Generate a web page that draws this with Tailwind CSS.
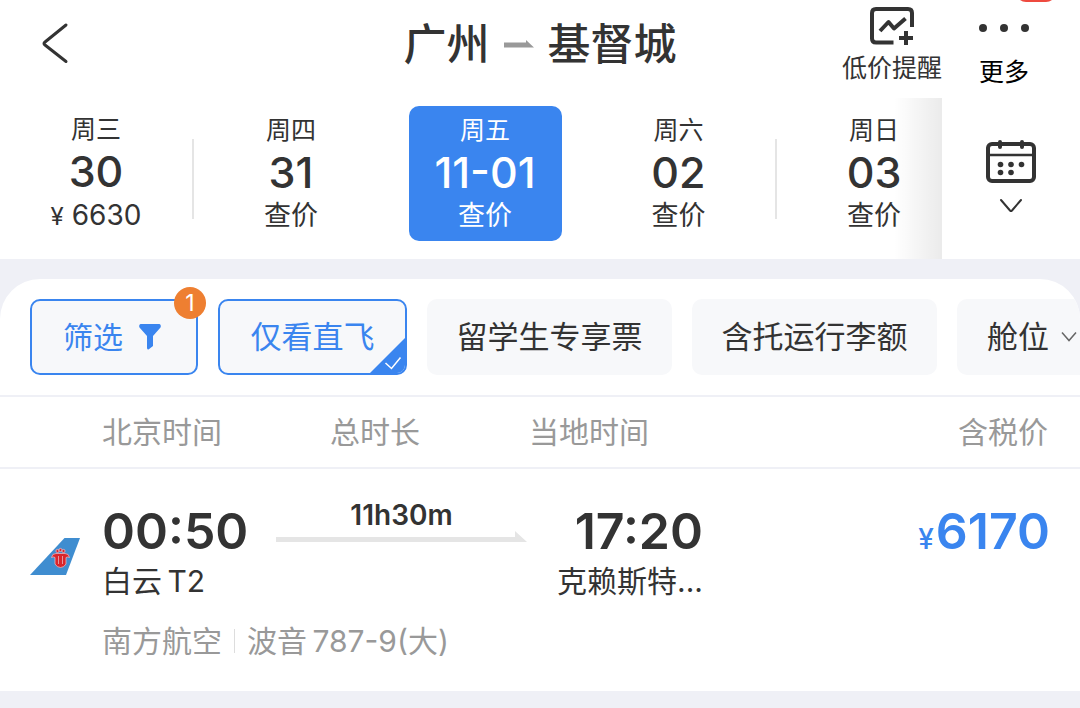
<!DOCTYPE html>
<html lang="zh-CN">

<head>
  <meta charset="UTF-8">
  <meta name="viewport" content="width=device-width, initial-scale=1.0">
  <script src="https://cdn.jsdelivr.net/npm/@tailwindcss/browser@4"></script>
  <title>广州 - 基督城</title>
</head>

<body class="min-h-screen overflow-x-hidden bg-[#eff0f6] text-[#333333] font-['Inter','Noto_Sans_CJK_SC',sans-serif]">

  <header class="bg-white">
    <nav class="relative flex h-[98px] items-start justify-between overflow-hidden pl-10 pr-[50px]">
      <a href="#" aria-label="返回" class="pt-[22px]">
        <svg class="h-11 w-8" viewBox="0 0 32 44" fill="none" stroke="#333" stroke-width="3" stroke-linecap="round" stroke-linejoin="round">
          <path d="M26 3L5 20Q3 21.500 5 23L26 39.500" />
        </svg>
      </a>

      <h1 class="absolute inset-x-0 top-4 mx-auto flex w-fit items-center gap-3.5 text-[43px] leading-14 font-medium">
        <span>广州</span>
        <svg class="h-2 w-[30px]" viewBox="0 0 30 8" fill="#999"><path d="M0 2.500H22V0L30 7.500H0Z" /></svg>
        <span>基督城</span>
      </h1>

      <div class="flex items-start gap-9">
        <button class="flex flex-col items-center pt-1.5">
          <svg class="h-10 w-11" viewBox="0 0 44 40" fill="none" stroke="#333" stroke-width="4">
            <path d="M23.500 36.500H6Q2 36.500 2 32.500V7Q2 3 6 3H38Q42 3 42 7V21" />
            <path d="M10 25L18.500 16L24 22.500L35.500 12.500" stroke-linejoin="round" />
            <path d="M36 25V39M29 32H43" />
          </svg>
          <span class="text-[25px] leading-11">低价提醒</span>
        </button>
        <button class="flex flex-col items-center pt-1.5 text-black">
          <svg class="h-11 w-[52px]" viewBox="0 0 52 44" fill="#333">
            <circle cx="5" cy="22" r="4" />
            <circle cx="26" cy="22" r="4" />
            <circle cx="47" cy="22" r="4" />
          </svg>
          <span class="text-[25px] leading-11">更多</span>
        </button>
      </div>
      <span class="absolute right-6 -top-[18px] h-5 w-10 rounded-full bg-[#ee4a3f]"></span>
    </nav>

    <div class="flex h-[161px]">
      <ul class="relative flex flex-1 overflow-hidden text-center">
        <li class="flex w-[194px] shrink-0 items-center justify-center">
          <button class="h-full flex-1 pb-2.5">
            <span class="block text-[25px] leading-9">周三</span>
            <span class="block text-[43px] leading-12 font-medium">30</span>
            <span class="block text-[28px] leading-10"><span class="text-[24px]">¥</span> 6630</span>
          </button>
          <i class="h-20 w-0.5 bg-[#e5e5e5]"></i>
        </li>
        <li class="flex w-[194px] shrink-0 justify-center">
          <button class="h-full flex-1 pb-2.5">
            <span class="block text-[25px] leading-9">周四</span>
            <span class="block text-[43px] leading-12 font-medium">31</span>
            <span class="block text-[27px] leading-10">查价</span>
          </button>
        </li>
        <li class="flex w-[194px] shrink-0 justify-center">
          <button class="mt-2 h-[135px] w-[153px] rounded-[10px] bg-[#3a85ef] text-white">
            <span class="block text-[25px] leading-9">周五</span>
            <span class="block text-[43px] leading-12 font-medium">11-01</span>
            <span class="block text-[27px] leading-10">查价</span>
          </button>
        </li>
        <li class="flex w-[195px] shrink-0 items-center justify-center">
          <button class="h-full flex-1 pb-2.5">
            <span class="block text-[25px] leading-9">周六</span>
            <span class="block text-[43px] leading-12 font-medium">02</span>
            <span class="block text-[27px] leading-10">查价</span>
          </button>
          <i class="h-20 w-0.5 bg-[#e5e5e5]"></i>
        </li>
        <li class="flex w-[194px] shrink-0 justify-center">
          <button class="h-full flex-1 pb-2.5">
            <span class="block text-[25px] leading-9">周日</span>
            <span class="block text-[43px] leading-12 font-medium">03</span>
            <span class="block text-[27px] leading-10">查价</span>
          </button>
        </li>
        <!-- fade at the end of the scrolling dates -->
        <li class="pointer-events-none absolute inset-y-0 right-0 w-12 bg-linear-to-r from-black/0 to-black/8"></li>
      </ul>
      <button class="flex w-[138px] shrink-0 flex-col items-center justify-center gap-3.5 pb-1.5" aria-label="日历">
        <svg class="h-[46px] w-[52px]" viewBox="0 0 52 46" fill="none" stroke="#333" stroke-width="4">
          <rect x="3" y="6" width="46" height="37" rx="4" />
          <path d="M4 17H48" stroke-width="2.500" />
          <path d="M15 4V9M37 4V9" stroke-linecap="round" />
          <g fill="#333" stroke="none">
            <circle cx="15.500" cy="26.500" r="2.800" /><circle cx="26" cy="26.500" r="2.800" /><circle cx="36.500" cy="26.500" r="2.800" />
            <circle cx="15.500" cy="34.500" r="2.800" /><circle cx="26" cy="34.500" r="2.800" />
          </g>
        </svg>
        <svg class="h-4 w-6" viewBox="0 0 24 16" fill="none" stroke="#333" stroke-width="2" stroke-linecap="round" stroke-linejoin="round">
          <path d="M2 2L11 12.500Q12 13.500 13 12.500L22 2" />
        </svg>
      </button>
    </div>
  </header>

  <main class="mt-5 overflow-hidden rounded-t-[40px] bg-white">
    <div class="flex gap-5 pl-[30px] pt-5 pb-5 text-[31px] whitespace-nowrap">
      <button class="relative flex h-[76px] w-[168px] shrink-0 items-center justify-center gap-4 rounded-[10px] border-2 border-[#3a85ef] bg-[#f7f8fa] pr-1 text-[30px] text-[#3a85ef]">
        筛选
        <svg class="h-[26px] w-[22px]" viewBox="0 0 22 26" fill="#3a85ef"><path d="M1.500 0H20.500Q22.500 1 21.500 3.500L14 12V22L9.500 25.500Q8 25.500 8 24V12L.500 3.500Q-.500 1 1.500 0Z" /></svg>
        <span class="absolute -top-[14px] -right-[10px] size-8 rounded-full bg-[#ee7f31] text-[23px] leading-8 text-white">1</span>
      </button>
      <button class="relative h-[76px] w-[189px] shrink-0 overflow-hidden rounded-[10px] border-2 border-[#3a85ef] bg-[#f7f8fa] text-[#3a85ef]">
        仅看直飞
        <svg class="absolute right-0 bottom-0 h-[35px] w-[35px]" viewBox="0 0 35 35" fill="none">
          <path d="M35 0V35H0Z" fill="#3a85ef" />
          <path d="M15.500 25L21.500 30.500L30.500 19.500" stroke="#fff" stroke-width="1.500" />
        </svg>
      </button>
      <button class="h-[76px] w-[245px] shrink-0 rounded-[10px] bg-[#f7f8fa]">留学生专享票</button>
      <button class="h-[76px] w-[245px] shrink-0 rounded-[10px] bg-[#f7f8fa]">含托运行李额</button>
      <button class="flex h-[76px] w-[152px] shrink-0 items-center gap-3 rounded-[10px] bg-[#f7f8fa] pl-[30px]">
        舱位
        <svg class="h-3 w-4" viewBox="0 0 16 12" fill="none" stroke="#666" stroke-width="1.500"><path d="M1 1.500L8 9.500L15 1.500" /></svg>
      </button>
    </div>

    <table class="w-full table-fixed border-t-2 border-[#eff0f6] text-left text-[30px]">
      <colgroup>
        <col class="w-[102px]">
        <col class="w-[174px]">
        <col class="w-[251px]">
        <col class="w-[176px]">
        <col>
      </colgroup>
      <thead class="border-b-2 border-[#eff0f6] text-[#999999]">
        <tr class="h-[72px] whitespace-nowrap">
          <td></td>
          <th class="font-normal">北京时间</th>
          <th class="pl-[54px] font-normal">总时长</th>
          <th class="pl-0.5 font-normal">当地时间</th>
          <th class="pr-8 text-right font-normal">含税价</th>
        </tr>
      </thead>
      <tbody>
        <tr class="align-top whitespace-nowrap">
          <td class="pt-10 pl-[30px] align-middle">
            <svg class="h-[37px] w-[50px]" viewBox="0 0 50 37">
              <path d="M34.500 0H50L36 37H0Z" fill="#3f8dd0" />
              <!-- kapok flower -->
              <g fill="#d9252c" stroke="#e9b3bd" stroke-width=".8">
                <circle cx="27.500" cy="13" r="1.600" /><circle cx="30.500" cy="12" r="1.600" /><circle cx="33.500" cy="13" r="1.600" />
                <path d="M21.500 19.500Q22 15.500 26 15.500H35Q39 15.500 39.500 19.500Q37.500 18.500 36 19.500V26Q34 29.500 30.500 29.500Q27 29.500 25 26V19.500Q23.500 18.500 21.500 19.500Z" />
              </g>
              <path d="M28.500 18V26M32.500 18V26" stroke="#e9b3bd" stroke-width=".8" />
            </svg>
          </td>
          <td class="pt-[34px]">
            <p class="text-[50px] leading-14 font-semibold">00:50</p>
            <p class="leading-11">白云&thinsp;T2</p>
          </td>
          <td class="pt-[34px]">
            <p class="text-center text-[28px] leading-6 font-semibold">11h30m</p>
            <div class="mt-1 flex items-end">
              <div class="h-[5px] flex-1 bg-[#e5e5e5]"></div>
              <svg class="h-[11px] w-3" viewBox="0 0 12 11" fill="#e5e5e5"><path d="M0 0L12 11H0Z" /></svg>
            </div>
          </td>
          <td class="pt-[34px] text-right">
            <p class="text-[50px] leading-14 font-semibold">17:20</p>
            <p class="leading-11">克赖斯特...</p>
          </td>
          <td class="pt-[34px] pr-[30px] text-right text-[#3a85ef]">
            <p class="text-[50px] leading-14 font-semibold"><span class="mr-0.5 text-[28px] font-medium">¥</span>6170</p>
          </td>
        </tr>
        <tr class="text-[#999999]">
          <td></td>
          <td colspan="4" class="pt-4 pb-7">
            <p class="flex items-center leading-11"><span>南方航空</span><i class="mx-3 h-6 w-px bg-[#dddddd]"></i><span>波音&thinsp;787-9(大)</span></p>
          </td>
        </tr>
      </tbody>
    </table>
  </main>

</body>

</html>
